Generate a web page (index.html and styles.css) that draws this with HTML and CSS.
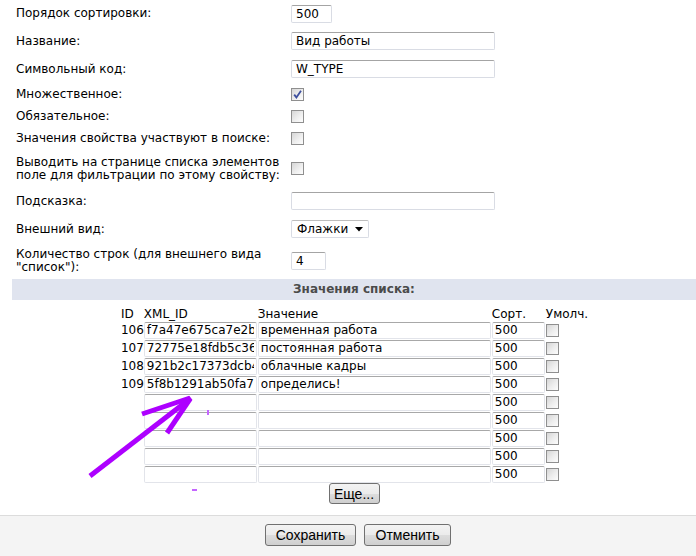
FILE: index.html
```
<!DOCTYPE html>
<html lang="ru">
<head>
  <meta charset="UTF-8" />
  <title>Свойство</title>
  <link rel="stylesheet" href="styles.css">
</head>
<body>
  <div class="page">
    <div class="fields">
      <div class="row h27">
        <div class="label">Порядок сортировки:</div>
        <div class="value"><input class="text w41" type="text" value="500" /></div>
      </div>
      <div class="row h28">
        <div class="label">Название:</div>
        <div class="value"><input class="text w204" type="text" value="Вид работы" /></div>
      </div>
      <div class="row h28">
        <div class="label">Символьный код:</div>
        <div class="value"><input class="text w204" type="text" value="W_TYPE" /></div>
      </div>
      <div class="row h22">
        <div class="label">Множественное:</div>
        <div class="value">
          <span class="chk checked">
            <svg width="11" height="11" viewBox="0 0 11 11"><path d="M2.2 5.6 L4.4 8.4 L9 1.8" fill="none" stroke="#3d4f9e" stroke-width="1.8"/></svg>
          </span>
        </div>
      </div>
      <div class="row h22">
        <div class="label">Обязательное:</div>
        <div class="value"><span class="chk"></span></div>
      </div>
      <div class="row h23">
        <div class="label">Значения свойства участвуют в поиске:</div>
        <div class="value"><span class="chk"></span></div>
      </div>
      <div class="row h37">
        <div class="label">Выводить на странице списка элементов поле для фильтрации по этому свойству:</div>
        <div class="value"><span class="chk"></span></div>
      </div>
      <div class="row h28">
        <div class="label">Подсказка:</div>
        <div class="value"><input class="text w204" type="text" value="" /></div>
      </div>
      <div class="row h28">
        <div class="label">Внешний вид:</div>
        <div class="value">
          <div class="select">
            <span>Флажки</span>
            <svg width="8" height="5" viewBox="0 0 8 5"><path d="M0 0 H8 L4 4.5 Z" fill="#000"/></svg>
          </div>
        </div>
      </div>
      <div class="row h36">
        <div class="label">Количество строк (для внешнего вида "список"):</div>
        <div class="value"><input class="text w35" type="text" value="4" /></div>
      </div>
    </div>

    <div class="section-title">Значения списка:</div>

    <table class="values">
      <tr>
        <th class="c-id">ID</th>
        <th class="c-xml">XML_ID</th>
        <th class="c-val">Значение</th>
        <th class="c-sort">Сорт.</th>
        <th class="c-def">Умолч.</th>
      </tr>
      <tr>
        <td class="c-id">106</td>
        <td><input class="cell xml" type="text" value="f7a47e675ca7e2b1" /></td>
        <td><input class="cell val" type="text" value="временная работа" /></td>
        <td><input class="cell sort" type="text" value="500" /></td>
        <td><span class="chk"></span></td>
      </tr>
      <tr>
        <td class="c-id">107</td>
        <td><input class="cell xml" type="text" value="72775e18fdb5c36a" /></td>
        <td><input class="cell val" type="text" value="постоянная работа" /></td>
        <td><input class="cell sort" type="text" value="500" /></td>
        <td><span class="chk"></span></td>
      </tr>
      <tr>
        <td class="c-id">108</td>
        <td><input class="cell xml" type="text" value="921b2c17373dcb4e" /></td>
        <td><input class="cell val" type="text" value="облачные кадры" /></td>
        <td><input class="cell sort" type="text" value="500" /></td>
        <td><span class="chk"></span></td>
      </tr>
      <tr>
        <td class="c-id">109</td>
        <td><input class="cell xml" type="text" value="5f8b1291ab50fa7c" /></td>
        <td><input class="cell val" type="text" value="определись!" /></td>
        <td><input class="cell sort" type="text" value="500" /></td>
        <td><span class="chk"></span></td>
      </tr>
      <tr>
        <td class="c-id"></td>
        <td><input class="cell xml" type="text" value="" /></td>
        <td><input class="cell val" type="text" value="" /></td>
        <td><input class="cell sort" type="text" value="500" /></td>
        <td><span class="chk"></span></td>
      </tr>
      <tr>
        <td class="c-id"></td>
        <td><input class="cell xml" type="text" value="" /></td>
        <td><input class="cell val" type="text" value="" /></td>
        <td><input class="cell sort" type="text" value="500" /></td>
        <td><span class="chk"></span></td>
      </tr>
      <tr>
        <td class="c-id"></td>
        <td><input class="cell xml" type="text" value="" /></td>
        <td><input class="cell val" type="text" value="" /></td>
        <td><input class="cell sort" type="text" value="500" /></td>
        <td><span class="chk"></span></td>
      </tr>
      <tr>
        <td class="c-id"></td>
        <td><input class="cell xml" type="text" value="" /></td>
        <td><input class="cell val" type="text" value="" /></td>
        <td><input class="cell sort" type="text" value="500" /></td>
        <td><span class="chk"></span></td>
      </tr>
      <tr>
        <td class="c-id"></td>
        <td><input class="cell xml" type="text" value="" /></td>
        <td><input class="cell val" type="text" value="" /></td>
        <td><input class="cell sort" type="text" value="500" /></td>
        <td><span class="chk"></span></td>
      </tr>
    </table>

    <div class="more">
      <button class="btn btn-more" type="button">Еще...</button>
    </div>
  </div>

  <div class="footer">
    <button class="btn btn-save" type="button">Сохранить</button>
    <button class="btn btn-cancel" type="button">Отменить</button>
  </div>

  <!-- hand-drawn marker over the form -->
  <svg class="marker" width="696" height="556" viewBox="0 0 696 556">
    <g stroke="#ad00ff" stroke-width="5" fill="none" stroke-linecap="butt">
      <path d="M90 476 L191 398" />
      <path d="M142 414 L190 398" />
      <path d="M167 433 L190 399" />
    </g>
    <rect x="207" y="410" width="2" height="5" fill="#c466ff" />
    <rect x="192" y="489" width="5" height="2" fill="#c466ff" />
  </svg>
</body>
</html>
```

FILE: styles.css
```
* {
  box-sizing: border-box;
}

body {
  margin: 0;
  font-family: "DejaVu Sans", Verdana, sans-serif;
  font-size: 12px;
  color: #000;
  background-color: #fff;
  position: relative;
  min-height: 556px;
}

.page {
  padding-left: 12px;
}

.row {
  display: grid;
  grid-template-columns: 279px 1fr;
  align-items: center;
}

.h22 { height: 22px; }
.h23 { height: 23px; }
.h27 { height: 27px; }
.h28 { height: 28px; }
.h36 { height: 36px; }
.h37 { height: 37px; }

.label {
  padding-left: 4px;
  padding-right: 10px;
  line-height: 13px;
}

.value {
  display: flex;
  align-items: center;
}

.text {
  height: 18px;
  padding: 0 4px;
  font-family: "DejaVu Sans", Verdana, sans-serif;
  font-size: 12px;
  color: #000;
  border: 1px solid #d9dce4;
  border-top-color: #a4a4a4;
  border-radius: 2px;
  background-color: #fff;
  outline: none;
}

.w35 { width: 35px; }
.w41 { width: 41px; }
.w204 { width: 204px; }

.chk {
  display: inline-block;
  width: 13px;
  height: 13px;
  border: 1px solid #8f8f8f;
  background: linear-gradient(135deg, #d6d6d6 0%, #eeeeee 55%, #fdfdfd 100%);
  position: relative;
}

.chk.checked svg {
  position: absolute;
  left: 0;
  top: 0;
}

.select {
  display: flex;
  align-items: center;
  justify-content: space-between;
  width: 78px;
  height: 18px;
  padding: 0 5px 0 5px;
  border: 1px solid #d9dce4;
  border-top-color: #bdbdbd;
  border-radius: 2px;
}

.section-title {
  height: 21px;
  line-height: 21px;
  background-color: #e0e4ef;
  color: #4b4b4b;
  font-weight: bold;
  text-align: center;
}

.values {
  border-collapse: collapse;
  margin: 7px auto 0;
}

.values th {
  height: 14px;
  line-height: 14px;
  padding: 0;
  font-weight: normal;
  text-align: left;
  vertical-align: bottom;
}

.values td {
  height: 18px;
  padding: 0;
  vertical-align: middle;
}

.c-id { width: 22px; padding-left: 1px !important; }
.c-xml { width: 114px; }
.c-val { width: 234px; }
.c-sort { width: 54px; }
.c-def { width: 40px; }

.values td .chk {
  display: block;
}

.cell {
  display: block;
  height: 17px;
  padding: 0 2px;
  font-family: "DejaVu Sans", Verdana, sans-serif;
  font-size: 12px;
  color: #000;
  border: 1px solid #e2e4ea;
  border-top-color: #a8a8a8;
  border-radius: 2px;
  background-color: #fff;
  outline: none;
}

.cell.xml { width: 113px; }
.cell.val { width: 233px; }
.cell.sort { width: 53px; }

.more {
  display: flex;
  justify-content: center;
  margin-top: 0;
  padding-bottom: 11px;
}

.btn {
  height: 22px;
  padding: 0 7px;
  font-family: "Liberation Sans", Arial, sans-serif;
  font-size: 14px;
  color: #000;
  border: 1px solid #707070;
  border-radius: 3px;
  background: linear-gradient(#f3f3f3 0%, #ebebeb 50%, #dddddd 50%, #cfcfcf 100%);
  cursor: pointer;
}

.btn-more {
  width: 51px;
  height: 21px;
  padding: 0;
}

.btn-save { width: 91px; }
.btn-cancel { width: 87px; }

.footer {
  display: flex;
  justify-content: center;
  gap: 8px;
  padding: 8px 0 0 20px;
  height: 60px;
  border-top: 1px solid #dcdcdc;
  background-color: #f4f4f4;
}

.marker {
  position: absolute;
  left: 0;
  top: 0;
  pointer-events: none;
}
```
